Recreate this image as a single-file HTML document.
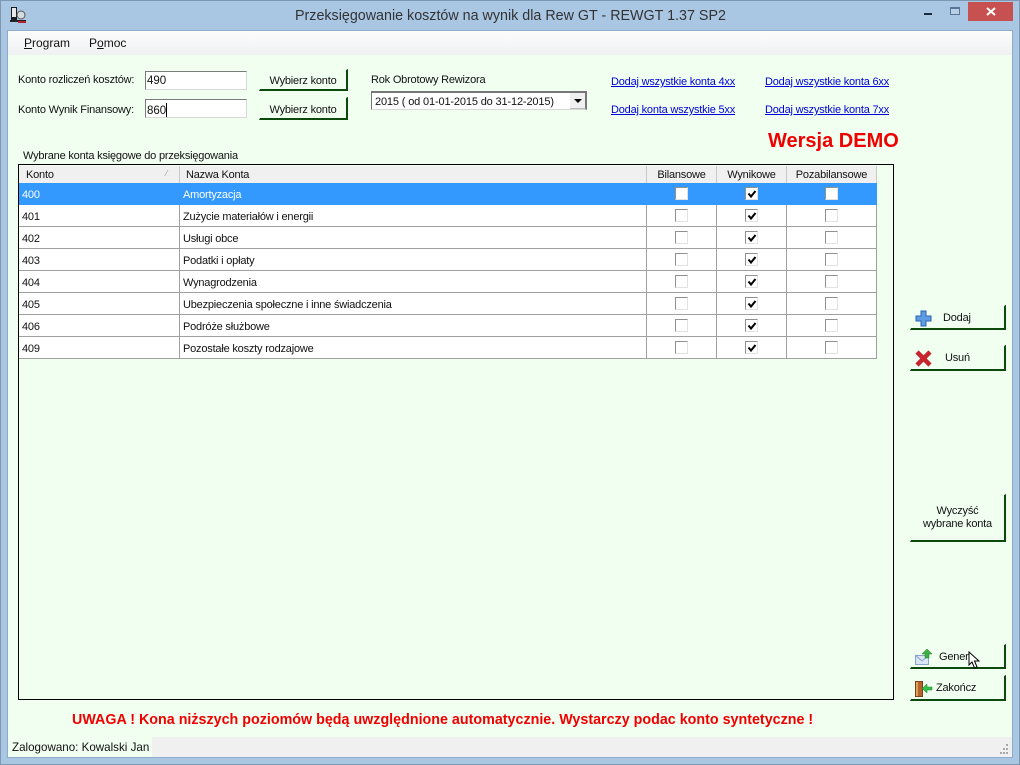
<!DOCTYPE html>
<html><head><meta charset="utf-8"><style>
html,body{margin:0;padding:0}
body{width:1020px;height:765px;overflow:hidden;position:relative;background:#a9c6e3;font:11px "Liberation Sans",sans-serif;letter-spacing:-.2px;color:#111}
.a{position:absolute;white-space:nowrap}
.btn{position:absolute;box-sizing:border-box;background:#f0fff0;border-right:2px solid #0c4a0c;border-bottom:2px solid #0c4a0c;border-top:1px solid #f0fff0;border-left:1px solid #f0fff0;text-align:center;color:#111}
.inp{position:absolute;box-sizing:border-box;background:#fff;border:1px solid #d8d8d8;border-top:1px solid #7a7a7a;border-left:1px solid #7a7a7a;height:19px;padding:3px 0 0 1px;font-size:11.5px;letter-spacing:0}
a{color:#0000d8;text-decoration:underline;position:absolute;white-space:nowrap}
.c{position:absolute;box-sizing:border-box;height:22px;border-right:1px solid #a0a0a0;border-bottom:1px solid #a0a0a0;padding:6px 0 0 3px;background:#fff;white-space:nowrap;overflow:hidden}
.h{position:absolute;top:166px;height:17px;background:#f0f0f0;box-sizing:border-box;border-right:1px solid #c8c8c8;padding-top:3px;white-space:nowrap}
.cb{position:absolute;width:13px;height:13px;box-sizing:border-box;background:#fff;border:1px solid #909090;border-right-color:#e2e2e2;border-bottom-color:#e2e2e2}
.cb svg{position:absolute;left:1px;top:1px}
u{text-decoration:underline}
</style></head><body>
<div class="a" style="left:0;top:0;width:1020px;height:765px;box-sizing:border-box;border:1px solid #7f98b2"></div>
<svg class="a" style="left:10px;top:7px" width="18" height="16" viewBox="0 0 18 16"><rect x="1" y="0" width="6" height="13" fill="#1c1c24"/><rect x="2" y="1" width="4" height="9" fill="#e8e8e8"/><circle cx="11" cy="8" r="4" fill="#d8dce0" stroke="#555"/><rect x="0" y="13" width="16" height="2" fill="#222"/><rect x="8" y="14" width="8" height="2" fill="#b02030"/></svg>
<div class="a" style="left:295px;top:8px;font-size:14.3px;letter-spacing:0;color:#333">Przeksięgowanie kosztów na wynik dla Rew GT - REWGT 1.37 SP2</div>
<div class="a" style="left:924px;top:13px;width:8px;height:2px;background:#1a2a3a"></div>
<div class="a" style="left:950px;top:7px;width:10px;height:8px;box-sizing:border-box;border:1px solid #5a7596;border-top-width:2px;background:#b9cfe6"></div>
<div class="a" style="left:968px;top:2px;width:45px;height:19px;background:#c75050"></div>
<svg class="a" style="left:986px;top:7px" width="10" height="9"><path d="M1 1L9 8M9 1L1 8" stroke="#fff" stroke-width="2"/></svg>

<div class="a" style="left:8px;top:31px;width:1004px;height:726px;background:#f0fff0;outline:1px solid #8fabcc"></div>
<div class="a" style="left:8px;top:31px;width:1004px;height:24px;background:linear-gradient(#fcfcfd,#f0f1f2)"></div>
<div class="a" style="left:24px;top:36px;font-size:12px;letter-spacing:0"><u>P</u>rogram</div>
<div class="a" style="left:89px;top:36px;font-size:12px;letter-spacing:0">P<u>o</u>moc</div>

<div class="a" style="left:18px;top:74px">Konto rozliczeń kosztów:</div>
<div class="a" style="left:18px;top:104px">Konto Wynik Finansowy:</div>
<div class="inp" style="left:145px;top:71px;width:102px">490</div>
<div class="inp" style="left:145px;top:99px;width:102px">860<span style="display:inline-block;width:1px;height:14px;background:#000;vertical-align:-3px"></span></div>
<div class="btn" style="left:259px;top:69px;width:89px;height:22px;padding-top:5px">Wybierz konto</div>
<div class="btn" style="left:259px;top:97px;width:89px;height:23px;padding-top:6px">Wybierz konto</div>

<div class="a" style="left:371px;top:74px">Rok Obrotowy Rewizora</div>
<div class="a" style="left:371px;top:91px;width:216px;height:19px;box-sizing:border-box;background:#fff;border:1px solid #d8d8d8;border-top:2px solid #777;border-left:1px solid #777;border-right:2px solid #777;padding:3px 0 0 3px;font-size:11px;letter-spacing:-.15px">2015 ( od 01-01-2015 do 31-12-2015)</div>
<div class="a" style="left:570px;top:93px;width:15px;height:15px;background:#f0f0f0;border-right:1px solid #777;border-bottom:1px solid #bbb"></div>
<div class="a" style="left:574px;top:99px;width:0;height:0;border-left:4px solid transparent;border-right:4px solid transparent;border-top:4px solid #000"></div>

<a style="left:611px;top:76px">Dodaj wszystkie konta 4xx</a>
<a style="left:765px;top:76px">Dodaj wszystkie konta 6xx</a>
<a style="left:611px;top:104px">Dodaj konta wszystkie 5xx</a>
<a style="left:765px;top:104px">Dodaj wszystkie konta 7xx</a>
<div class="a" style="left:768px;top:130px;font-size:20px;letter-spacing:0;font-weight:bold;color:#f00000">Wersja DEMO</div>

<div class="a" style="left:23px;top:150px">Wybrane konta księgowe do przeksięgowania</div>
<div class="a" style="left:18px;top:164px;width:876px;height:536px;box-sizing:border-box;border:1px solid #000;background:#f0fff0"></div>
<div class="h" style="left:19px;width:161px;padding-left:7px">Konto<span class="a" style="left:147px;top:3px;font-size:8px;color:#999">⁄</span></div>
<div class="h" style="left:180px;width:467px;padding-left:6px">Nazwa Konta</div>
<div class="h" style="left:647px;width:70px;text-align:center">Bilansowe</div>
<div class="h" style="left:717px;width:70px;text-align:center">Wynikowe</div>
<div class="h" style="left:787px;width:90px;text-align:center">Pozabilansowe</div>
<div class="c" style="left:19px;top:183px;width:161px;background:#3399ff;color:#fff;border-color:#3399ff">400</div><div class="c" style="left:180px;top:183px;width:467px;background:#3399ff;color:#fff;border-color:#3399ff">Amortyzacja</div><div class="c" style="left:647px;top:183px;width:70px;background:#3399ff;border-color:#3399ff"></div><div class="c" style="left:717px;top:183px;width:70px;background:#3399ff;border-color:#3399ff"></div><div class="c" style="left:787px;top:183px;width:90px;background:#3399ff;border-color:#3399ff"></div>
<div class="c" style="left:19px;top:205px;width:161px">401</div><div class="c" style="left:180px;top:205px;width:467px">Zużycie materiałów i energii</div><div class="c" style="left:647px;top:205px;width:70px"></div><div class="c" style="left:717px;top:205px;width:70px"></div><div class="c" style="left:787px;top:205px;width:90px"></div>
<div class="c" style="left:19px;top:227px;width:161px">402</div><div class="c" style="left:180px;top:227px;width:467px">Usługi obce</div><div class="c" style="left:647px;top:227px;width:70px"></div><div class="c" style="left:717px;top:227px;width:70px"></div><div class="c" style="left:787px;top:227px;width:90px"></div>
<div class="c" style="left:19px;top:249px;width:161px">403</div><div class="c" style="left:180px;top:249px;width:467px">Podatki i opłaty</div><div class="c" style="left:647px;top:249px;width:70px"></div><div class="c" style="left:717px;top:249px;width:70px"></div><div class="c" style="left:787px;top:249px;width:90px"></div>
<div class="c" style="left:19px;top:271px;width:161px">404</div><div class="c" style="left:180px;top:271px;width:467px">Wynagrodzenia</div><div class="c" style="left:647px;top:271px;width:70px"></div><div class="c" style="left:717px;top:271px;width:70px"></div><div class="c" style="left:787px;top:271px;width:90px"></div>
<div class="c" style="left:19px;top:293px;width:161px">405</div><div class="c" style="left:180px;top:293px;width:467px">Ubezpieczenia społeczne i inne świadczenia</div><div class="c" style="left:647px;top:293px;width:70px"></div><div class="c" style="left:717px;top:293px;width:70px"></div><div class="c" style="left:787px;top:293px;width:90px"></div>
<div class="c" style="left:19px;top:315px;width:161px">406</div><div class="c" style="left:180px;top:315px;width:467px">Podróże służbowe</div><div class="c" style="left:647px;top:315px;width:70px"></div><div class="c" style="left:717px;top:315px;width:70px"></div><div class="c" style="left:787px;top:315px;width:90px"></div>
<div class="c" style="left:19px;top:337px;width:161px">409</div><div class="c" style="left:180px;top:337px;width:467px">Pozostałe koszty rodzajowe</div><div class="c" style="left:647px;top:337px;width:70px"></div><div class="c" style="left:717px;top:337px;width:70px"></div><div class="c" style="left:787px;top:337px;width:90px"></div>

<div class="cb" style="left:675px;top:187px"></div><div class="cb" style="left:745px;top:187px"><svg width="10" height="10"><path d="M1.5 4.5L4 7.5L8.5 2" fill="none" stroke="#000" stroke-width="2"/></svg></div><div class="cb" style="left:825px;top:187px"></div>
<div class="cb" style="left:675px;top:209px"></div><div class="cb" style="left:745px;top:209px"><svg width="10" height="10"><path d="M1.5 4.5L4 7.5L8.5 2" fill="none" stroke="#000" stroke-width="2"/></svg></div><div class="cb" style="left:825px;top:209px"></div>
<div class="cb" style="left:675px;top:231px"></div><div class="cb" style="left:745px;top:231px"><svg width="10" height="10"><path d="M1.5 4.5L4 7.5L8.5 2" fill="none" stroke="#000" stroke-width="2"/></svg></div><div class="cb" style="left:825px;top:231px"></div>
<div class="cb" style="left:675px;top:253px"></div><div class="cb" style="left:745px;top:253px"><svg width="10" height="10"><path d="M1.5 4.5L4 7.5L8.5 2" fill="none" stroke="#000" stroke-width="2"/></svg></div><div class="cb" style="left:825px;top:253px"></div>
<div class="cb" style="left:675px;top:275px"></div><div class="cb" style="left:745px;top:275px"><svg width="10" height="10"><path d="M1.5 4.5L4 7.5L8.5 2" fill="none" stroke="#000" stroke-width="2"/></svg></div><div class="cb" style="left:825px;top:275px"></div>
<div class="cb" style="left:675px;top:297px"></div><div class="cb" style="left:745px;top:297px"><svg width="10" height="10"><path d="M1.5 4.5L4 7.5L8.5 2" fill="none" stroke="#000" stroke-width="2"/></svg></div><div class="cb" style="left:825px;top:297px"></div>
<div class="cb" style="left:675px;top:319px"></div><div class="cb" style="left:745px;top:319px"><svg width="10" height="10"><path d="M1.5 4.5L4 7.5L8.5 2" fill="none" stroke="#000" stroke-width="2"/></svg></div><div class="cb" style="left:825px;top:319px"></div>
<div class="cb" style="left:675px;top:341px"></div><div class="cb" style="left:745px;top:341px"><svg width="10" height="10"><path d="M1.5 4.5L4 7.5L8.5 2" fill="none" stroke="#000" stroke-width="2"/></svg></div><div class="cb" style="left:825px;top:341px"></div>

<div class="btn" style="left:910px;top:305px;width:96px;height:25px"></div>
<div class="a" style="left:943px;top:312px">Dodaj</div>
<svg class="a" style="left:915px;top:310px" width="17" height="17"><path d="M6 1H11V6H16V11H11V16H6V11H1V6H6Z" fill="#5f9be0" stroke="#2a63b8"/></svg>
<div class="btn" style="left:910px;top:345px;width:96px;height:26px"></div>
<div class="a" style="left:945px;top:352px">Usuń</div>
<svg class="a" style="left:915px;top:350px" width="17" height="17"><path d="M2 2L15 15M15 2L2 15" stroke="#c8242c" stroke-width="4.5"/></svg>
<div class="btn" style="left:910px;top:494px;width:96px;height:48px;padding-top:10px;line-height:13px">Wyczyść<br>wybrane konta</div>
<div class="btn" style="left:910px;top:644px;width:96px;height:25px"></div>
<div class="a" style="left:939px;top:651px">Gener</div>
<svg class="a" style="left:915px;top:649px" width="18" height="17"><rect x=".5" y="6.5" width="13" height="9" fill="#dbe6f4" stroke="#8aa4c8"/><path d="M0 6L7 12L14 6" fill="none" stroke="#8aa4c8"/><path d="M10 5V9H14V5H17L12 0L7 5Z" fill="#3cb043" stroke="#1f7a28" stroke-width=".5"/></svg>
<svg class="a" style="left:968px;top:651px" width="12" height="19"><path d="M1 1V14L4 11L6.5 17L9 16L6.5 10H11Z" fill="#fff" stroke="#000"/></svg>
<div class="btn" style="left:910px;top:675px;width:96px;height:26px"></div>
<div class="a" style="left:936px;top:682px">Zakończ</div>
<svg class="a" style="left:914px;top:680px" width="20" height="18"><rect x="1.5" y="1.5" width="7" height="15" fill="#b5652a" stroke="#7a4218"/><rect x="2" y="2" width="2" height="14" fill="#e0a060"/><path d="M18 7H13V4L8 8.5L13 13V10H18Z" fill="#35c24a" stroke="#1f7a28" stroke-width=".5"/></svg>

<div class="a" style="left:72px;top:712px;font-size:14.3px;letter-spacing:0;font-weight:bold;color:#f00000">UWAGA ! Kona niższych poziomów będą uwzględnione automatycznie. Wystarczy podac konto syntetyczne !</div>

<div class="a" style="left:8px;top:737px;width:1004px;height:20px;background:#f0f0f0"></div>
<div class="a" style="left:8px;top:737px;width:144px;height:20px;background:#f0fff0"></div>
<div class="a" style="left:12px;top:741px;font-size:11.6px;letter-spacing:0;color:#111">Zalogowano: Kowalski Jan</div>
<svg class="a" style="left:998px;top:744px" width="12" height="11" fill="#a8a8a8"><rect x="8" y="0" width="2" height="2"/><rect x="5" y="4" width="2" height="2"/><rect x="8" y="4" width="2" height="2"/><rect x="2" y="8" width="2" height="2"/><rect x="5" y="8" width="2" height="2"/><rect x="8" y="8" width="2" height="2"/></svg>
</body></html>
